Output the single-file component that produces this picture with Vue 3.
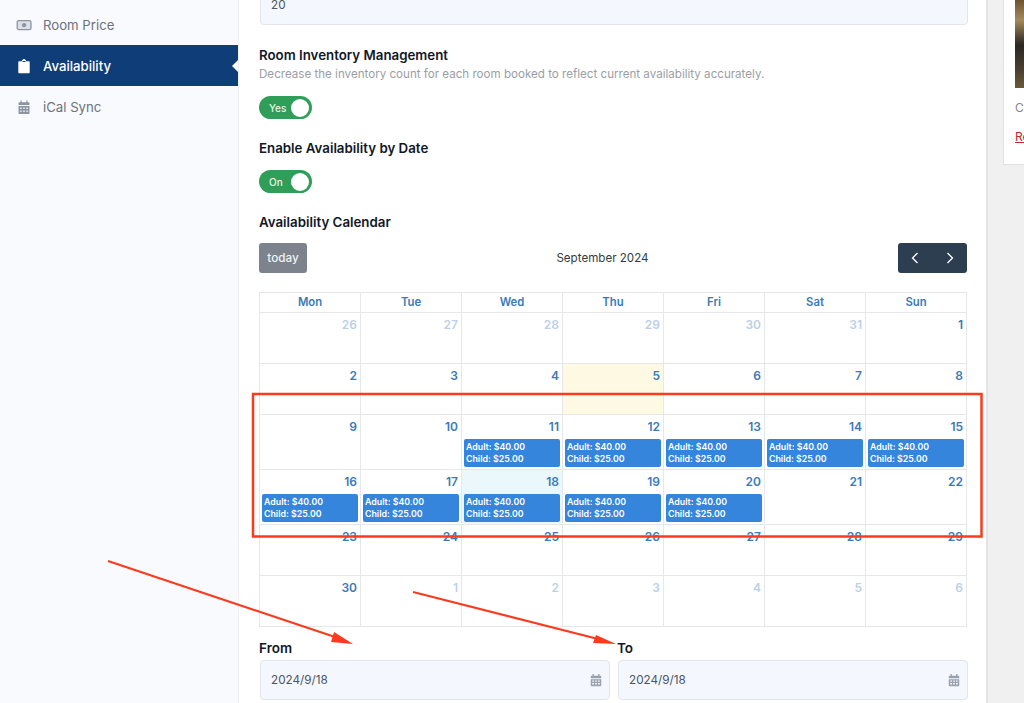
<template>
  <div class="page">
    <aside class="sidebar">
      <div
        v-for="item in menu"
        :key="item.label"
        class="menu-item"
        :class="{ active: item.active }"
      >
        <svg v-if="item.icon === 'money'" class="menu-icon" viewBox="0 0 16 16">
          <rect x="1.200" y="3.600" width="13.800" height="9" rx="1.600" fill="#dcdfe5" stroke="#8d94a3" stroke-width="1.300" />
          <circle cx="8.100" cy="8.100" r="2.200" fill="#8d94a3" />
        </svg>
        <svg v-else-if="item.icon === 'clipboard'" class="menu-icon" viewBox="0 0 16 16">
          <path d="M3.300 3.200h2.500C6 2 6.900 1 8 1s2 1 2.200 2.200h2.500c.6 0 1 .4 1 1v10c0 .6-.4 1-1 1H3.300c-.6 0-1-.4-1-1v-10c0-.6.400-1 1-1z" fill="#fff" />
          <rect x="6.500" y="3" width="3" height="1" fill="#0f3d78" />
        </svg>
        <svg v-else class="menu-icon" viewBox="0 0 16 16">
          <path d="M4.500 1.500h1.200v1.700h4.600V1.500h1.200v1.700h1c.6 0 1 .4 1 1V6H2.500V4.200c0-.6.400-1 1-1h1zM2.500 7h11v7c0 .6-.4 1-1 1h-9c-.6 0-1-.4-1-1z" fill="#8d94a3" />
          <path d="M4 8.500h1.800v1.500H4zM7.100 8.500h1.800v1.500H7.100zM10.200 8.500H12v1.500h-1.800zM4 11.500h1.800V13H4zM7.100 11.500h1.800V13H7.100zM10.200 11.500H12V13h-1.800z" fill="#dcdfe5" />
        </svg>
        <span>{{ item.label }}</span>
      </div>
    </aside>

    <main class="main">
      <div class="field-input first">20</div>

      <h3 class="label inventory">Room Inventory Management</h3>
      <p class="hint">Decrease the inventory count for each room booked to reflect current availability accurately.</p>
      <div class="toggle"><span>Yes</span><i></i></div>

      <h3 class="label by-date">Enable Availability by Date</h3>
      <div class="toggle"><span>On</span><i></i></div>

      <h3 class="label cal-title">Availability Calendar</h3>
      <div class="toolbar">
        <button class="today">today</button>
        <div class="month">September 2024</div>
        <div class="nav">
          <svg viewBox="0 0 10 14"><path d="M7.500 2 2.500 7l5 5" /></svg>
          <svg viewBox="0 0 10 14"><path d="M2.500 2l5 5-5 5" /></svg>
        </div>
      </div>

      <div class="calendar">
        <div v-for="name in dayNames" :key="name" class="day-name">{{ name }}</div>
        <div
          v-for="cell in cells"
          :key="cell.key"
          class="cell"
          :class="{ muted: cell.muted, sun: cell.sun, now: cell.now }"
        >
          <div class="num">{{ cell.day }}</div>
          <div v-if="cell.event" class="event">
            <div>Adult: $40.00</div>
            <div>Child: $25.00</div>
          </div>
        </div>
      </div>

      <div class="dates">
        <div v-for="col in dateCols" :key="col" class="date-col">
          <div class="date-label">{{ col }}</div>
          <div class="field-input">2024/9/18
            <svg class="cal-icon" viewBox="0 0 16 16">
              <path d="M4 1h1.500v2h5V1H12v2h1c.6 0 1 .4 1 1v2H2V4c0-.6.400-1 1-1h1zM2 7h12v7c0 .6-.4 1-1 1H3c-.6 0-1-.4-1-1z" fill="#9aa1ae" />
              <path d="M3.700 8.500h2v1.500h-2zM7 8.500h2v1.500H7zM10.300 8.500h2v1.500h-2zM3.700 11.500h2V13h-2zM7 11.500h2V13H7zM10.300 11.500h2V13h-2z" fill="#f4f7fd" />
            </svg>
          </div>
        </div>
      </div>
    </main>

    <div class="right">
      <div class="card">
        <div class="thumb"></div>
        <div class="card-text">Cl</div>
        <a class="card-link">Re</a>
      </div>
    </div>

    <!-- annotations drawn on top of the screenshot -->
    <svg class="marks" viewBox="0 0 1024 703">
      <rect x="253" y="394" width="728.500" height="142.500" fill="none" stroke="#fb3a1e" stroke-width="2.500" />
      <path d="M108 561 338 638" stroke="#fb3a1e" stroke-width="2.200" />
      <path d="M353 644 331 642 334 632z" fill="#fb3a1e" />
      <path d="M413 592 602 640" stroke="#fb3a1e" stroke-width="2.200" />
      <path d="M616 644 593 643 596 635z" fill="#fb3a1e" />
    </svg>
  </div>
</template>

<script setup>
const menu = [
  { label: "Room Price", icon: "money" },
  { label: "Availability", icon: "clipboard", active: true },
  { label: "iCal Sync", icon: "calendar" },
];

const dayNames = ["Mon", "Tue", "Wed", "Thu", "Fri", "Sat", "Sun"];
const dateCols = ["From", "To"];

// sept 2024, grid starts on mon 26 aug
const priced = [11, 12, 13, 14, 15, 16, 17, 18, 19, 20];
const cells = [];
for (let i = 0; i < 42; i++) {
  const inMonth = i >= 6 && i < 36;
  const day = i < 6 ? 26 + i : inMonth ? i - 5 : i - 35;
  cells.push({
    key: i,
    day,
    muted: !inMonth,
    sun: inMonth && day === 5,
    now: inMonth && day === 18,
    event: inMonth && priced.includes(day),
  });
}
</script>

<style>
html,
body {
  margin: 0;
  background: #fff;
}
</style>

<style scoped>
.page {
  position: relative;
  display: flex;
  width: 1024px;
  height: 703px;
  overflow: hidden;
  font-family: Inter, "Liberation Sans", sans-serif;
  background: #f0f0f1;
}

.sidebar {
  width: 239px;
  flex-shrink: 0;
  padding-top: 4px;
  box-sizing: border-box;
  background: #f9fafd;
  border-right: 1px solid #eef0f3;
}

.menu-item {
  position: relative;
  display: flex;
  align-items: center;
  gap: 11px;
  height: 41px;
  padding-left: 16px;
  font-size: 13.200px;
  color: #6b7280;
}

.menu-item.active {
  background: #0f3d78;
  color: #fff;
  font-weight: 500;
}

.menu-item.active::after {
  content: "";
  position: absolute;
  right: 0;
  top: 15px;
  border: 6px solid transparent;
  border-right-color: #fff;
  border-left-width: 0;
}

.menu-icon {
  width: 16px;
  height: 16px;
}

.main {
  width: 749px;
  flex-shrink: 0;
  box-sizing: border-box;
  padding: 0 19px 0 20px;
  background: #fff;
  border-right: 2px solid #e4e4e6;
}

.field-input {
  position: relative;
  height: 40px;
  box-sizing: border-box;
  display: flex;
  align-items: center;
  padding: 0 10px;
  font-size: 11.700px;
  color: #4b5563;
  background: #f4f7fd;
  border: 1px solid #e2e5ea;
  border-radius: 4px;
}

.field-input.first {
  margin: -15px -1px 0 1px;
}

.cal-icon {
  position: absolute;
  right: 6px;
  top: 12px;
  width: 14px;
  height: 14px;
}

.label {
  margin: 0;
  font-size: 13.300px;
  line-height: 20px;
  font-weight: 600;
  color: #111827;
}

.inventory {
  margin-top: 20px;
}

.by-date {
  margin-top: 19px;
}

.cal-title {
  margin-top: 19px;
}

.hint {
  margin: 0 0 13px;
  font-size: 11.600px;
  line-height: 18px;
  color: #9b9ea4;
}

.toggle {
  display: flex;
  align-items: center;
  justify-content: space-between;
  width: 53px;
  height: 23px;
  box-sizing: border-box;
  padding: 0 3px 0 10px;
  border-radius: 12px;
  background: #2f9e58;
  color: #e6f5ea;
  font-size: 10px;
  font-weight: 500;
}

.by-date + .toggle {
  margin-top: 12px;
}

.toggle i {
  width: 18px;
  height: 18px;
  border-radius: 50%;
  background: #fff;
}

.toolbar {
  display: flex;
  align-items: center;
  justify-content: space-between;
  height: 30px;
  margin-top: 11px;
}

.today {
  width: 48px;
  height: 30px;
  padding: 0;
  border: 0;
  border-radius: 3px;
  background: #7c838c;
  color: #f1f2f3;
  font-family: inherit;
  font-size: 11.700px;
  font-weight: 500;
}

.month {
  font-size: 11.600px;
  color: #333b44;
}

.nav {
  display: flex;
  align-items: center;
  justify-content: space-around;
  width: 69px;
  height: 30px;
  border-radius: 3px;
  background: #2c3e50;
}

.nav svg {
  width: 10px;
  height: 14px;
}

.nav path {
  fill: none;
  stroke: #fff;
  stroke-width: 1.300;
}

.calendar {
  display: grid;
  grid-template-columns: repeat(7, 1fr);
  grid-template-rows: 20px 51px 51px 55px 55px 51px 51px;
  width: 708px;
  box-sizing: border-box;
  margin-top: 19px;
  border-top: 1px solid #e5e7eb;
  border-left: 1px solid #e5e7eb;
}

.day-name,
.cell {
  box-sizing: border-box;
  border-right: 1px solid #e5e7eb;
  border-bottom: 1px solid #e5e7eb;
}

.day-name {
  text-align: center;
  line-height: 19px;
  font-size: 11.300px;
  font-weight: 600;
  color: #3a7ab8;
}

.cell {
  padding: 4px 2px 0;
}

.cell.sun {
  background: #fdf9e2;
}

.cell.now {
  background: #eaf7fb;
}

.num {
  padding-right: 1px;
  text-align: right;
  font-size: 12px;
  line-height: 16px;
  font-weight: 600;
  color: #3a7ab8;
}

.cell.muted .num {
  opacity: 0.35;
}

.event {
  margin-top: 4px;
  padding: 2px;
  border-radius: 2px;
  background: #3585dc;
  color: #fff;
  font-size: 8.800px;
  line-height: 12px;
  font-weight: 600;
}

.dates {
  display: flex;
  gap: 8px;
  margin: 11px -1px 0 1px;
}

.date-col {
  width: 350px;
}

.date-label {
  font-size: 13.500px;
  line-height: 20px;
  font-weight: 600;
  color: #111827;
  margin-bottom: 2px;
  margin-left: -1px;
}

.right {
  flex: 1;
  padding-left: 15px;
}

.card {
  height: 165px;
  box-sizing: border-box;
  padding-left: 11px;
  background: #fff;
  border: 1px solid #e2e2e4;
  border-top: 0;
  font-size: 12px;
  overflow: hidden;
}

.thumb {
  height: 88px;
  background: linear-gradient(180deg, #6b5332 0, #a38a5c 20px, #2a2622 45px, #4a4030 70px, #6a5a3a 88px);
}

.card-text {
  margin-top: 12px;
  color: #858585;
}

.card-link {
  display: block;
  margin-top: 14px;
  color: #c0272d;
  text-decoration: underline;
}

.marks {
  position: absolute;
  inset: 0;
  width: 1024px;
  height: 703px;
  pointer-events: none;
}
</style>
